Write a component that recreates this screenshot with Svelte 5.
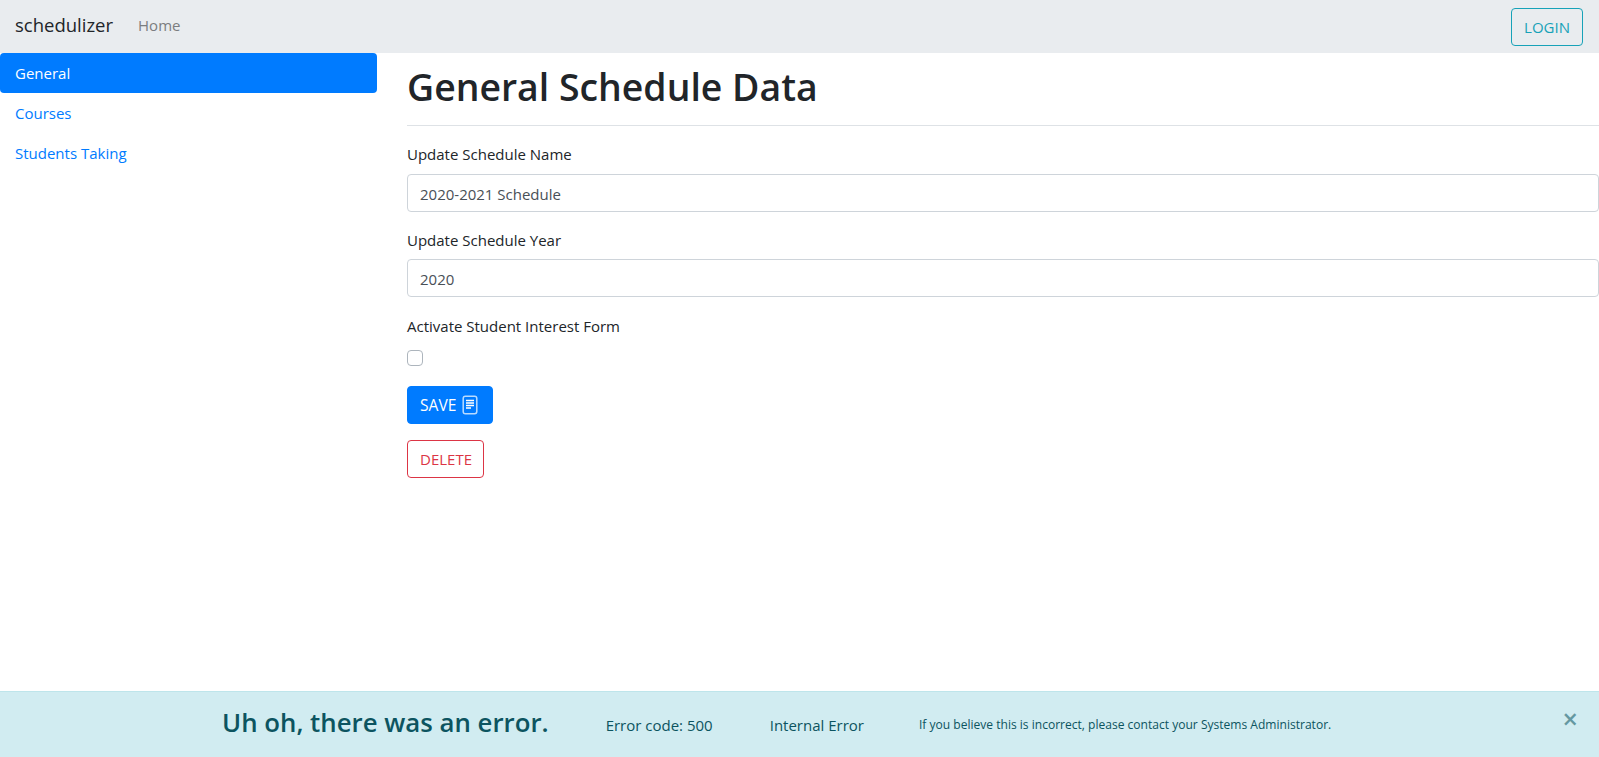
<script>
  let name = $state('2020-2021 Schedule');
  let year = $state('2020');
</script>

<div class="page">
  <nav class="navbar">
    <a class="brand" href="#top">schedulizer</a>
    <a class="home" href="#top">Home</a>
    <button class="login">LOGIN</button>
  </nav>
  <div class="main">
    <aside class="side">
      <a class="pill active" href="#top">General</a>
      <a class="pill" href="#top">Courses</a>
      <a class="pill" href="#top">Students Taking</a>
    </aside>
    <section class="content">
      <h1>General Schedule Data</h1>
      <div class="group first">
        <label for="n">Update Schedule Name</label>
        <input id="n" class="field" bind:value={name} />
      </div>
      <div class="group">
        <label for="y">Update Schedule Year</label>
        <input id="y" class="field" bind:value={year} />
      </div>
      <div class="group check">
        <label for="c">Activate Student Interest Form</label>
        <input id="c" class="box" type="checkbox" />
      </div>
      <button class="btn save"><span class="save-text">SAVE</span>
        <svg width="16" height="20" viewBox="0 0 16 20" fill="none" aria-hidden="true">
          <rect x="1.2" y="1.2" width="13.6" height="17.6" rx="2.2" stroke="#b9dbff" stroke-width="1.5"/>
          <path d="M4 5.5h8M4 8h8M4 10.5h8M4 13h5" stroke="#fff" stroke-width="1.3"/>
        </svg>
      </button>
      <button class="btn del">DELETE</button>
    </section>
  </div>
  <div class="alert">
    <h3>Uh oh, there was an error.</h3>
    <span class="code">Error code: 500</span>
    <span class="kind">Internal Error</span>
    <small>If you believe this is incorrect, please contact your Systems Administrator.</small>
    <button class="close" aria-label="Close">×</button>
  </div>
</div>

<style>
  :global(body) {
    margin: 0;
    background: #fff;
    font-family: "Open Sans", "Noto Sans", sans-serif;
    font-size: 15px;
    color: #212529;
  }
  .page { height: 757px; display: flex; flex-direction: column; overflow: hidden; }
  a { text-decoration: none; }
  .navbar { height: 53px; flex: none; background: #e9ecef; display: flex; align-items: center; padding: 0 16px 0 15px; box-sizing: border-box; }
  .brand { font-size: 18.5px; color: #212529; margin-right: 25px; position: relative; top: -2px; }
  .home { color: #7b7d7f; font-size: 15px; position: relative; top: -2px; }
  .login { margin-left: auto; height: 38px; width: 72px; border: 1px solid #17a2b8; border-radius: 4px; background: transparent; color: #17a2b8; font: inherit; padding: 0; }
  .main { display: flex; flex: 1; min-height: 0; }
  .side { width: 377px; flex: none; display: flex; flex-direction: column; margin-right: 30px; }
  .pill { height: 40px; display: flex; align-items: center; padding-left: 15px; color: #007bff; border-radius: 4px; }
  .pill.active { background: #007bff; color: #fff; }
  .content { flex: 1; min-width: 0; }
  h1 { margin: 0; height: 72px; border-bottom: 1px solid #dee2e6; font-size: 37.4px; font-weight: 600; line-height: 68px; }
  .group { padding-top: 17px; }
  .group.first { padding-top: 17px; }
  .first label { height: 23px; margin-bottom: 8px; }
  label { display: block; line-height: 22px; height: 22px; margin-bottom: 8px; }
  .field { display: block; width: 100%; box-sizing: border-box; height: 38px; border: 1px solid #ced4da; border-radius: 4px; padding: 1px 12px 0; font: inherit; color: #495057; background: #fff; }
  .group + .group { padding-top: 17px; }
  .group.check { padding-top: 18px; }
  .check label { margin-bottom: 13px; }
  .box { appearance: none; display: block; width: 16px; height: 16px; margin: 0; border: 1px solid #adb5bd; border-radius: 4px; background: #fff; }
  .btn { display: flex; align-items: center; height: 38px; border-radius: 4px; font: inherit; padding: 0 12px; box-sizing: border-box; }
  .save { margin-top: 20px; gap: 6px; width: 86px; background: #007bff; border: 1px solid #007bff; color: #fff; }
  .save-text { font-size: 15.6px; }
  .del { margin-top: 16px; width: 77px; background: #fff; border: 1px solid #dc3545; color: #dc3545; }
  .alert { position: relative; flex: none; height: 66px; box-sizing: border-box; background: #d1ecf1; border-top: 1px solid #bee5eb; color: #0c5460; display: flex; align-items: center; padding-left: 222px; }
  h3 { margin: 0 57px 0 0; font-size: 25.8px; font-weight: 600; position: relative; top: -3px; }
  .code { margin-right: 57px; }
  .kind { margin-right: 55px; }
  small { font-size: 12.06px; }
  .close { position: absolute; top: 12px; right: 21px; border: none; background: none; padding: 0; color: #0c5460; opacity: .55; font: 600 27px "Open Sans", sans-serif; line-height: 30px; }
</style>
